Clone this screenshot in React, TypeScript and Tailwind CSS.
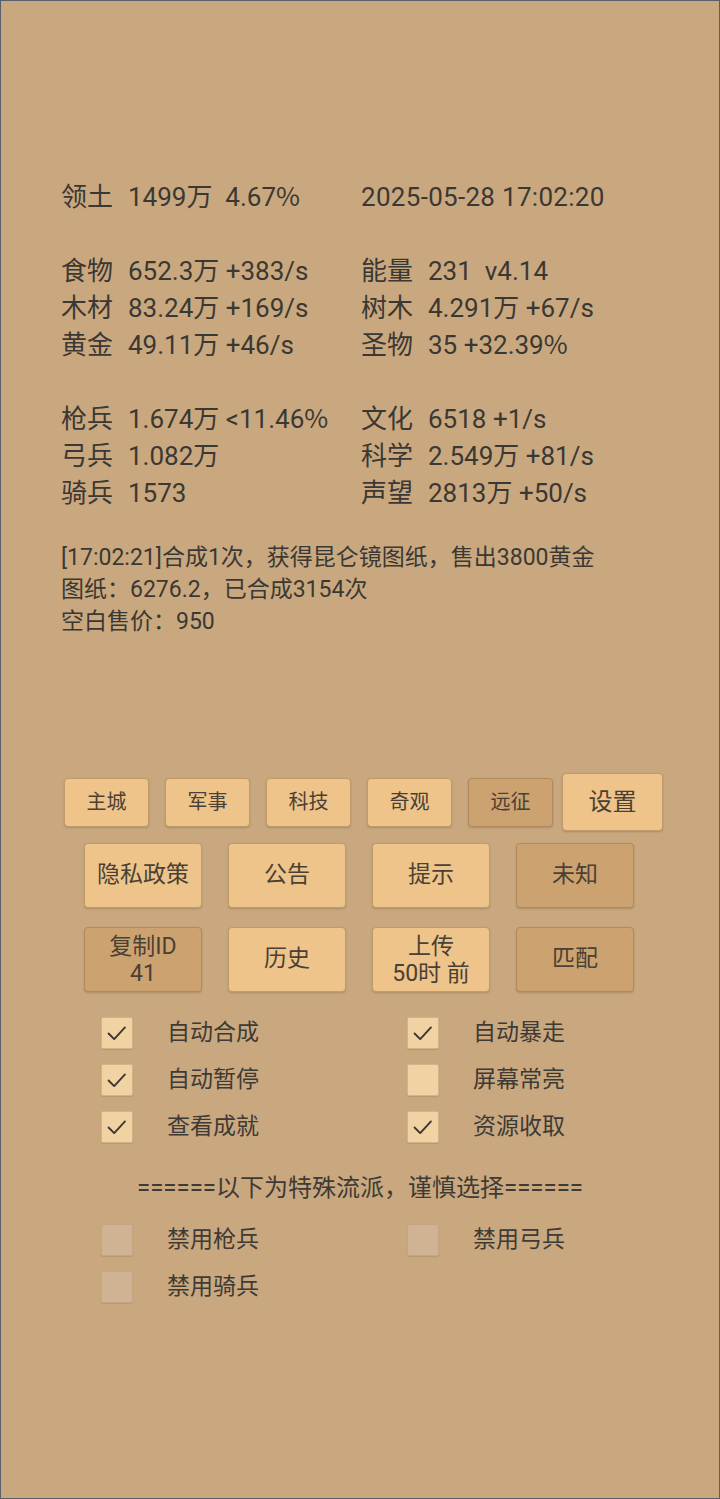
import React from "react";

const FONT = { fontFamily: 'Roboto, "Noto Sans CJK SC", sans-serif' };

function Btn({
  children,
  dark,
  className,
}: {
  children: React.ReactNode;
  dark?: boolean;
  className: string;
}) {
  return (
    <div
      className={
        "flex flex-col items-center justify-center rounded-[4px] border text-[#4a4034] shadow-[0_1px_2px_rgba(90,60,20,0.25)] " +
        (dark ? "bg-[#cca271] border-[#b08a5e] " : "bg-[#eec48b] border-[#bf9a6a] ") +
        className
      }
    >
      {children}
    </div>
  );
}

function Check({ checked, disabled }: { checked?: boolean; disabled?: boolean }) {
  return (
    <div
      className={
        "w-[32px] h-[32px] rounded-[2px] border flex items-center justify-center shadow-[0_1px_1px_rgba(90,60,20,0.15)] " +
        (disabled ? "bg-[#cfb392] border-[#c4a782]" : "bg-[#f1d2a3] border-[#d4b386]")
      }
    >
      {checked && (
        <svg width="32" height="32" viewBox="0 0 32 32" fill="none">
          <polyline
            points="7,16.5 13,22.5 24.5,10"
            stroke="#3a3632"
            strokeWidth="2"
            strokeLinecap="round"
            strokeLinejoin="round"
          />
        </svg>
      )}
    </div>
  );
}

function CheckItem({ label, checked, disabled }: { label: string; checked?: boolean; disabled?: boolean }) {
  return (
    <div className="flex items-center h-[32px]">
      <Check checked={checked} disabled={disabled} />
      <span className="ml-[34px] text-[23px] leading-[32px] text-[#3e3a35]">{label}</span>
    </div>
  );
}

function Pct() {
  return (
    <span className="leading-[0]" style={{ fontFamily: '"Noto Sans CJK SC", sans-serif' }}>
      %
    </span>
  );
}

function Stat({ label, children }: { label?: string; children?: React.ReactNode }) {
  return (
    <div className="h-[37px] whitespace-pre">
      {label && <span className="inline-block w-[67px]">{label}</span>}
      {children}
    </div>
  );
}

export default function App() {
  return (
    <div
      className="w-[720px] h-[1499px] border border-[#58606c] bg-[#c9a87f] flex flex-col overflow-hidden"
      style={FONT}
    >
      <div className="pt-[178px] pl-[60px] text-[26px] leading-[37px] text-[#3b3834]">
        <div className="grid grid-cols-[300px_1fr]">
          <Stat label="领土">
            1499万  4.67<Pct />
          </Stat>
          <Stat>
            <span className="tracking-[0.3px]">2025-05-28 17:02:20</span>
          </Stat>
          <Stat />
          <Stat />
          <Stat label="食物">652.3万 +383/s</Stat>
          <Stat label="能量">231  v4.14</Stat>
          <Stat label="木材">83.24万 +169/s</Stat>
          <Stat label="树木">4.291万 +67/s</Stat>
          <Stat label="黄金">49.11万 +46/s</Stat>
          <Stat label="圣物">
            35 +32.39<Pct />
          </Stat>
          <Stat />
          <Stat />
          <Stat label="枪兵">
            1.674万 &lt;11.46<Pct />
          </Stat>
          <Stat label="文化">6518 +1/s</Stat>
          <Stat label="弓兵">1.082万</Stat>
          <Stat label="科学">2.549万 +81/s</Stat>
          <Stat label="骑兵">1573</Stat>
          <Stat label="声望">2813万 +50/s</Stat>
        </div>
      </div>

      <div className="mt-[30px] pl-[60px] text-[23px] leading-[32px] text-[#3b3834]">
        <div>[17:02:21]合成1次，获得昆仑镜图纸，售出3800黄金</div>
        <div>图纸：6276.2，已合成3154次</div>
        <div>空白售价：950</div>
      </div>

      <div className="mt-[135px] pl-[63px] flex items-center h-[58px]">
        <div className="flex gap-[16px]">
          <Btn className="w-[85px] h-[49px] text-[20px]">主城</Btn>
          <Btn className="w-[85px] h-[49px] text-[20px]">军事</Btn>
          <Btn className="w-[85px] h-[49px] text-[20px]">科技</Btn>
          <Btn className="w-[85px] h-[49px] text-[20px]">奇观</Btn>
          <Btn dark className="w-[85px] h-[49px] text-[20px]">远征</Btn>
        </div>
        <Btn className="ml-[9px] w-[101px] h-[58px] text-[24px] border-[#a88a62]">设置</Btn>
      </div>

      <div className="mt-[12px] pl-[83px] flex gap-[26px]">
        <Btn className="w-[118px] h-[65px] text-[23px]">隐私政策</Btn>
        <Btn className="w-[118px] h-[65px] text-[23px]">公告</Btn>
        <Btn className="w-[118px] h-[65px] text-[23px]">提示</Btn>
        <Btn dark className="w-[118px] h-[65px] text-[23px]">未知</Btn>
      </div>

      <div className="mt-[19px] pl-[83px] flex gap-[26px]">
        <Btn dark className="w-[118px] h-[65px] text-[23px] leading-[27px]">
          <span>复制ID</span>
          <span>41</span>
        </Btn>
        <Btn className="w-[118px] h-[65px] text-[23px]">历史</Btn>
        <Btn className="w-[118px] h-[65px] text-[23px] leading-[27px]">
          <span>上传</span>
          <span className="whitespace-pre">50时 前</span>
        </Btn>
        <Btn dark className="w-[118px] h-[65px] text-[23px]">匹配</Btn>
      </div>

      <div className="mt-[25px] pl-[100px] grid grid-cols-[306px_1fr] gap-y-[15px]">
        <CheckItem label="自动合成" checked />
        <CheckItem label="自动暴走" checked />
        <CheckItem label="自动暂停" checked />
        <CheckItem label="屏幕常亮" />
        <CheckItem label="查看成就" checked />
        <CheckItem label="资源收取" checked />
      </div>

      <div className="mt-[29px] text-center text-[24px] leading-[32px] text-[#3e3a35]">
        ======以下为特殊流派，谨慎选择======
      </div>

      <div className="mt-[20px] pl-[100px] grid grid-cols-[306px_1fr] gap-y-[15px]">
        <CheckItem label="禁用枪兵" disabled />
        <CheckItem label="禁用弓兵" disabled />
        <CheckItem label="禁用骑兵" disabled />
      </div>
    </div>
  );
}
